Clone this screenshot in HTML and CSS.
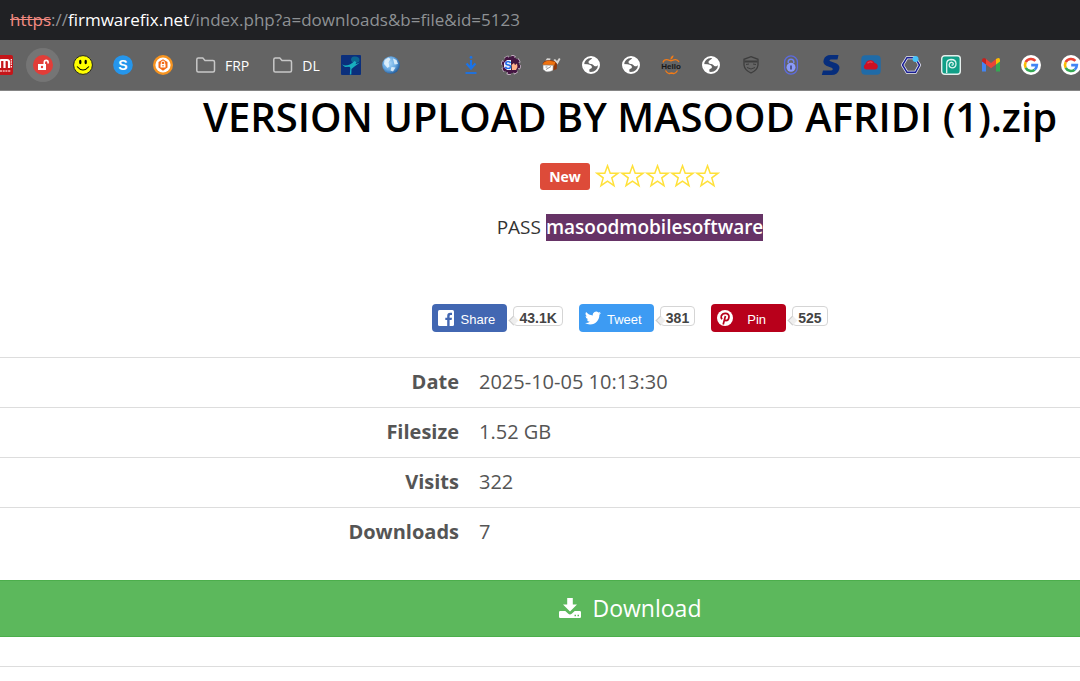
FILE: index.html
```
<!DOCTYPE html>
<html lang="en">
<head>
<meta charset="utf-8">
<meta name="viewport" content="width=device-width, initial-scale=1">
<title>VERSION UPLOAD BY MASOOD AFRIDI (1).zip</title>
<link rel="stylesheet" href="styles.css">
</head>
<body>
<svg class="defs" aria-hidden="true">
  <symbol id="globe" viewBox="0 0 20 20">
    <circle cx="10" cy="10" r="8" fill="#646464" stroke="#fff" stroke-width="2"/>
    <path d="M11.500 2.500C10.500 5 7.500 5 7.500 7.200 8 9.500 11 8.600 12.300 10 13.500 11.500 15.500 12 18 9.500L16.500 5 13.500 2.500Z" fill="#fff"/>
    <path d="M2 9 6.500 9.300C9.500 9.800 11.500 11 10.800 12.700 10.200 14 8.200 13.300 8.300 15L8.500 18 4.500 16.500Z" fill="#fff"/>
  </symbol>
  <symbol id="folder" viewBox="0 0 21 20">
    <path d="M1.800 4.500Q1.800 3 3.300 3H7.800L10 5.500H18Q19.500 5.500 19.500 7V15.500Q19.500 17 18 17H3.300Q1.800 17 1.800 15.500Z" fill="none" stroke="#c8c8c8" stroke-width="1.500"/>
  </symbol>
  <symbol id="google" viewBox="0 0 20 20">
    <circle cx="10" cy="10" r="10" fill="#fff"/>
    <path d="M14.400 5.900A6 6 0 0 0 4.700 7.200" fill="none" stroke="#ea4335" stroke-width="2.600"/>
    <path d="M4.700 7.200A6 6 0 0 0 4.700 12.800" fill="none" stroke="#fbbc05" stroke-width="2.600"/>
    <path d="M4.700 12.800A6 6 0 0 0 13.700 14.700" fill="none" stroke="#34a853" stroke-width="2.600"/>
    <path d="M13.700 14.700A6 6 0 0 0 15.900 10.100H10.200" fill="none" stroke="#4285f4" stroke-width="2.600"/>
  </symbol>
  <symbol id="star" viewBox="0 0 24 24">
    <path d="M12 1.800 14.700 9.200H22.600L16.300 13.900 18.500 21.600 12 17.100 5.500 21.600 7.700 13.900 1.400 9.200H9.300Z" fill="none" stroke="#ffe13a" stroke-width="1.500"/>
  </symbol>
</svg>

<header>
  <div class="address"><s>https</s>://<b>firmwarefix.net</b>/index.php?a=downloads&amp;b=file&amp;id=5123</div>
  <nav class="bookmarks" aria-label="Bookmarks">
    <a href="#" aria-label="Mobile tools"><svg viewBox="0 0 20 20"><rect width="20" height="20" rx="2" fill="#c51519"/><path d="M7 13V6Q7 5 8.500 5H14Q16 5 16 7V13M11.500 5V13" fill="none" stroke="#fff" stroke-width="2.200"/><path d="M18.300 4V13" stroke="#fff" stroke-width="1.200" stroke-dasharray="1.500 .8"/><path d="M7 16H18" stroke="#f3b5b5" stroke-width="1.300" stroke-dasharray="2 .7"/></svg></a>
    <a href="#" class="current" aria-label="Unlocker"><svg viewBox="0 0 20 20"><circle cx="10" cy="10" r="10" fill="#e23d38"/><rect x="5" y="9" width="8" height="6" fill="#fff"/><path d="M11.300 9V7.300a1.900 1.900 0 0 1 3.800 0V8.500" fill="none" stroke="#fff" stroke-width="1.600"/><circle cx="9" cy="12" r="1.200" fill="#e23d38"/></svg></a>
    <a href="#" aria-label="Smile"><svg viewBox="0 0 20 20"><circle cx="10" cy="10" r="9.400" fill="#ff0" stroke="#222" stroke-width="1"/><ellipse cx="7.300" cy="7" rx="1.200" ry="2.200"/><ellipse cx="12.700" cy="7" rx="1.200" ry="2.200"/><path d="M4 11.500Q10 18.500 16 11.500" fill="none" stroke="#000" stroke-width="1.100"/></svg></a>
    <a href="#" aria-label="S"><svg viewBox="0 0 20 20"><circle cx="10" cy="10" r="9.800" fill="#2596ec"/><text x="10" y="15" text-anchor="middle" class="letter" font-size="14" fill="#fff">S</text></svg></a>
    <a href="#" aria-label="Lock"><svg viewBox="0 0 20 20"><circle cx="10" cy="10" r="10" fill="#f79420"/><circle cx="10" cy="10" r="7.600" fill="#fff"/><path d="M10 4.300 14.500 7V12.500L10 15.700 5.500 12.500V7Z" fill="#f36b16"/><path d="M8.300 9V7.800a1.700 1.700 0 0 1 3.400 0V9" fill="none" stroke="#fff" stroke-width="1"/><rect x="7.500" y="9" width="5" height="3.500" rx=".6" fill="#fff"/><circle cx="10" cy="10.700" r=".8" fill="#f36b16"/></svg></a>
    <a href="#" class="folder"><svg><use href="#folder"/></svg><span>FRP</span></a>
    <a href="#" class="folder"><svg><use href="#folder"/></svg><span>DL</span></a>
    <a href="#" aria-label="Dancer"><svg viewBox="0 0 20 20"><rect width="20" height="20" rx="1" fill="#0b2f7c"/><path d="M10 5Q10 1 14 1.500 18.500 1.500 18.500 5 18.500 8 15 7.500L11 7Z" fill="#0c6690"/><path d="M1 9.500 4 10.500Q9 10.500 13.500 6L15.500 7.200 14.500 9.300 19 7.500 13.500 11.500 10.500 14 10.300 19.500H8.800L9.300 13 8.500 11.800 4 12Z" fill="#18aebf"/></svg></a>
    <a href="#" aria-label="World"><svg viewBox="0 0 20 20"><defs><radialGradient id="ball" cx=".4" cy=".4" r=".62"><stop offset="0" stop-color="#a9d6f8"/><stop offset=".6" stop-color="#68a9e2"/><stop offset="1" stop-color="#255f9f"/></radialGradient></defs><circle cx="10" cy="10" r="8.800" fill="url(#ball)"/><path d="M3.500 5 7.500 2.500 9.500 4 7.500 7.500 8.500 11.500 6.500 13 3 9ZM12 3.500 15.500 5 17 9 13.500 9.500ZM10.500 12 14.500 12.500 12 16.500 9.500 15.500Z" fill="#f0faff" opacity=".8"/></svg></a>
    <span class="blank"></span>
    <a href="#" aria-label="Downloads"><svg viewBox="0 0 20 20" fill="none" stroke="#1a73e8"><circle cx="10" cy="2.400" r="1.400" fill="#1a73e8" stroke="none"/><path d="M10 5V14M5.500 8.500 10 13.500 14.500 8.500" stroke-width="2.200"/><path d="M4.500 18H15.500" stroke-width="1.800"/></svg></a>
    <a href="#" aria-label="Gear"><svg viewBox="0 0 20 20"><circle cx="10" cy="10" r="8.200" fill="#431541" stroke="#d9c6d8" stroke-width="3.600" stroke-dasharray="3.820 2.620"/><circle cx="10" cy="10" r="8" fill="#431541" stroke="#431541" stroke-width="2.600" stroke-dasharray="3.140 3.140"/><path d="M3 8 6 5H10V15H6L3 12Z" fill="#e9f1ff"/><path d="M10.500 10 13 8 14 10 16 8.500 16.500 12 15 15H11Z" fill="#ffb18c"/><text x="6.800" y="14" text-anchor="middle" class="letter" font-size="11" fill="#1768e8">S</text></svg></a>
    <a href="#" aria-label="Helmet"><svg viewBox="0 0 20 20"><path d="M4.500 5.500 6 3.300 9.500 3.500 9 6ZM12.500 5 14 4 16 6 18 3 19.500 4 16.500 9.500Z" fill="#d8d5d2"/><path d="M1.500 9Q3 5 8 5.300 14 4.500 16 9L15.700 14 12 15.500V10Z" fill="#8f3508"/><path d="M1.500 10Q3 5.800 8.500 5.800L14.500 7 13 11Z" fill="#ef720f"/><path d="M2 10 12.300 10.200 12 15.500Q8 17.500 5 16.700L2 14.500Z" fill="#fff" stroke="#777" stroke-width=".6"/><path d="M5 14.500 10 11.500M4.500 12H6.500" stroke="#777" stroke-width=".8"/></svg></a>
    <a href="#" aria-label="Site"><svg><use href="#globe"/></svg></a>
    <a href="#" aria-label="Site"><svg><use href="#globe"/></svg></a>
    <a href="#" aria-label="Hello"><svg viewBox="0 0 20 20"><path d="M9.500 5Q9 1.500 12.500 .3 12.500 3.500 9.500 5Z" fill="#f47b16"/><path d="M2 7.500Q3 4 7 4.800L10 5.800 13 4.800Q16.500 4 18 7M4.500 15.500Q6.500 19 8.500 18.500L10.500 18 12.500 18.500Q14.500 19 16.500 15.500" fill="none" stroke="#f47b16" stroke-width="1.300"/><text x="10" y="13.800" text-anchor="middle" class="letter" font-size="8" fill="#171717">Hello</text></svg></a>
    <a href="#" aria-label="Site"><svg><use href="#globe"/></svg></a>
    <a href="#" aria-label="Shield"><svg viewBox="0 0 20 20" fill="none" stroke="#3d3d3d" stroke-width="1.300"><path d="M10 1.700 17 4.300V10Q16.500 15 10 18 3.500 15 3 10V4.300Z"/><path d="M3.500 6.500H16.500" stroke-width="2"/><path d="M5 9.500 8 9M12 9 15 9.500M6 12.500 10 14 14 12.500" stroke-width="1"/></svg></a>
    <a href="#" aria-label="Padlock"><svg viewBox="0 0 20 20" fill="none"><rect x="3.600" y=".8" width="12.800" height="18.400" rx="6.400" stroke="#5c6be0" stroke-width="1.300"/><path d="M7.200 8V7a2.800 2.800 0 0 1 5.600 0V8" stroke="#6f83f0" stroke-width="1.500"/><circle cx="10" cy="12.300" r="4.500" fill="#8b9bfa"/><path d="M10 10.500V14.500" stroke="#3f4579" stroke-width="1.600"/></svg></a>
    <a href="#" aria-label="S"><svg viewBox="0 0 20 20"><path d="M17.500 0 16.500 4.500H9.800Q7.800 4.700 8.700 6L15.500 8.500Q19.700 10.500 18 15 16.500 20 10.500 20H.8L2 15.500H10Q12.700 15 11.200 13L5.300 10.700Q1.300 8.500 2.800 4.500 4.200 0 9.500 0Z" fill="#062d7c"/></svg></a>
    <a href="#" aria-label="Cloud"><svg viewBox="0 0 20 20"><rect x=".3" y=".3" width="19.400" height="19.400" rx="4" fill="#1f6ba8"/><path d="M5 14.500A2.800 2.800 0 0 1 4.300 9.300Q5.500 5 9.500 5.300 12 4.500 13.700 8 16.800 8.500 16.800 11.500 16.500 14.500 14 14.500Z" fill="#cb1024"/><path d="M6.500 8.300Q9 5.900 11.500 7.500" fill="none" stroke="#e8424d" stroke-width="1.300"/></svg></a>
    <a href="#" aria-label="Hexagon"><svg viewBox="0 0 20 20" fill="none"><path d="M6 2.700H14L18.500 10 14.500 17.300H6L1.500 10Z" stroke="#e7e8f5" stroke-width="3"/><path d="M6 2.700H14L18.500 10 14.500 17.300H6L1.500 10Z" stroke="#171c91" stroke-width="1.500"/><circle cx="14.500" cy="4" r="3" fill="#46c3fa"/></svg></a>
    <a href="#" aria-label="Spiral"><svg viewBox="0 0 20 20"><rect x=".7" y=".7" width="18.600" height="18.600" rx="3" fill="#119f87" stroke="#e6efed" stroke-width="1.400"/><path d="M5.700 18V8.500Q5.700 4.700 10 4.500 15 4.500 15 8.700 15 12.700 11 12.800 7.800 12.500 8.200 9.300 8.700 7 10.800 7.300 12.700 7.800 12.100 9.400 11.600 10.500 10.500 9.800" fill="none" stroke="#dff5f0" stroke-width="1.300"/></svg></a>
    <a href="#" aria-label="Mail"><svg viewBox="0 0 20 20"><path d="M1 5V16.500H5V9Z" fill="#4285f4"/><path d="M15 9V16.500H19V5Z" fill="#34a853"/><path d="M1 5Q1 3 3.500 3L5 4V9.500L1 6.500Z" fill="#c5221f"/><path d="M5 4 10 8 15 4V9.500L10 13.200 5 9.500Z" fill="#ea4335"/><path d="M15 4Q19 1.500 19 5V6.500L15 9.500Z" fill="#fbbc04"/></svg></a>
    <a href="#" aria-label="Google"><svg><use href="#google"/></svg></a>
    <a href="#" aria-label="Google"><svg><use href="#google"/></svg></a>
  </nav>
</header>

<main>
  <section class="intro">
    <h1>VERSION UPLOAD BY MASOOD AFRIDI (1).zip</h1>
    <div class="rating">
      <span class="label">New</span>
      <span class="stars" role="img" aria-label="Not rated yet"><svg><use href="#star"/></svg><svg><use href="#star"/></svg><svg><use href="#star"/></svg><svg><use href="#star"/></svg><svg><use href="#star"/></svg></span>
    </div>
    <p class="pass">PASS <mark>masoodmobilesoftware</mark></p>
    <div class="social">
      <div class="share">
        <a href="#" class="facebook"><svg viewBox="0 0 16 16"><rect width="16" height="16" rx="1.500" fill="#fff"/><path d="M9.200 16V10H7.300V7.700H9.200V6Q9.200 2.800 12.300 2.800H14V5H12.700Q11.600 5 11.600 6.200V7.700H14L13.600 10H11.600V16Z" fill="#4267b2"/></svg><span>Share</span></a>
        <span class="count">43.1K</span>
      </div>
      <div class="share">
        <a href="#" class="twitter"><svg viewBox="0 0 24 24"><path fill="#fff" d="M23.950 4.570a10 10 0 0 1-2.820.770 4.960 4.960 0 0 0 2.160-2.720c-.950.550-2 .950-3.130 1.180a4.920 4.920 0 0 0-8.380 4.480C7.690 8.090 4.070 6.130 1.640 3.160a4.920 4.920 0 0 0 1.520 6.570 4.900 4.900 0 0 1-2.230-.610v.060a4.920 4.920 0 0 0 3.950 4.830 5 5 0 0 1-2.210.080 4.930 4.930 0 0 0 4.600 3.420A9.870 9.870 0 0 1 0 19.540a13.990 13.990 0 0 0 7.550 2.210c9.050 0 14-7.500 14-13.980 0-.210 0-.420-.020-.630a9.900 9.900 0 0 0 2.420-2.570Z"/></svg><span>Tweet</span></a>
        <span class="count">381</span>
      </div>
      <div class="share">
        <a href="#" class="pinterest"><svg viewBox="0 0 16 16"><circle cx="8" cy="8" r="8" fill="#fff"/><path d="M5 9.300Q3.700 7.500 4.300 5.800 5.500 3.200 8.400 3.300 12 3.500 12 6.800 11.600 10.600 8.900 10.600 7.900 10.500 7.500 9.700M8.400 6 6.200 14.500" fill="none" stroke="#b8001b" stroke-width="1.700"/></svg><span>Pin</span></a>
        <span class="count">525</span>
      </div>
    </div>
  </section>

  <table class="details">
    <tr><th scope="row">Date</th><td>2025-10-05 10:13:30</td></tr>
    <tr><th scope="row">Filesize</th><td>1.52 GB</td></tr>
    <tr><th scope="row">Visits</th><td>322</td></tr>
    <tr><th scope="row">Downloads</th><td>7</td></tr>
  </table>

  <button type="button" class="download"><svg viewBox="0 0 22 20"><path d="M8.200 0H13.800V6.500H18L11 13.500 4 6.500H8.200Z" fill="#fff"/><path d="M1.200 13H6.300L9.300 15.800Q11 17 12.700 15.800L15.700 13H20.800Q22 13 22 14.200V18.800Q22 20 20.800 20H1.200Q0 20 0 18.800V14.200Q0 13 1.200 13ZM15.500 16.800V18.200H17V16.800ZM18.500 16.800V18.200H20V16.800Z" fill="#fff" fill-rule="evenodd"/></svg><span>Download</span></button>
  <hr>
</main>
</body>
</html>
```
FILE: styles.css
```
:root {
  --offset: 180px;
  --line: #ddd;
}

* {
  box-sizing: border-box;
}

body {
  margin: 0;
  overflow-x: hidden;
  background: #fff;
  color: #555;
  font-family: "Open Sans", sans-serif;
  font-size: 20px;
}

a {
  color: inherit;
  text-decoration: none;
}

.defs {
  position: absolute;
  width: 0;
  height: 0;
}

.address {
  height: 40px;
  padding-left: 10px;
  background: #202124;
  color: #8e9194;
  font-family: "Open Sans", sans-serif;
  font-size: 17px;
  line-height: 39px;
  white-space: nowrap;
}

.address s {
  color: #f28b82;
}

.address b {
  color: #fff;
  font-weight: 400;
}

.bookmarks {
  display: flex;
  align-items: center;
  gap: 20px;
  height: 51px;
  overflow: hidden;
  border-bottom: 1px solid #858585;
  background: #646464;
}

.bookmarks > * {
  flex: none;
  width: 20px;
  height: 20px;
}

.bookmarks > :first-child {
  margin-left: -7px;
}

.bookmarks svg {
  display: block;
  width: 20px;
  height: 20px;
}

.bookmarks .current {
  border-radius: 50%;
  background: #757575;
  box-shadow: 0 0 0 7px #757575;
}

.bookmarks .folder {
  display: flex;
  align-items: center;
  gap: 9px;
  width: auto;
  padding: 0 1px 0 2px;
  color: #fff;
  font-family: "Open Sans", sans-serif;
  font-size: 14px;
}

.bookmarks .folder svg {
  width: 21px;
}

.letter {
  font-family: "Liberation Sans", sans-serif;
  font-weight: 700;
}

.intro {
  display: flex;
  flex-direction: column;
  align-items: center;
  padding-left: var(--offset);
}

h1 {
  margin: 0;
  color: #000;
  font-size: 40px;
  font-weight: 600;
  line-height: 52px;
  white-space: nowrap;
}

.rating {
  display: flex;
  align-items: center;
  gap: 5px;
  margin-top: 20px;
}

.label {
  padding: 0 9px;
  border-radius: 3px;
  background: #dd4b39;
  color: #fff;
  font-size: 14px;
  font-weight: 700;
  line-height: 27px;
}

.stars {
  display: flex;
  padding-bottom: 2px;
}

.stars svg {
  width: 25px;
  height: 24px;
}

.pass {
  margin: 24px 0 0;
  color: #333;
  font-size: 19px;
  font-weight: 500;
  line-height: 27px;
}

.pass mark {
  display: inline-block;
  background: #663366;
  color: #fff;
  font-weight: 600;
}

.social {
  display: flex;
  gap: 16px;
  margin-top: 63px;
  font-family: "Liberation Sans", Arial, sans-serif;
}

.share {
  display: flex;
  align-items: flex-start;
  gap: 6px;
}

.share a {
  display: flex;
  align-items: center;
  width: 75px;
  height: 28px;
  padding: 0 6px;
  border-radius: 4px;
  color: #fff;
  font-size: 13px;
}

.share a span {
  flex: 1;
  padding-top: 2px;
  text-align: center;
}

.share svg {
  width: 16px;
  height: 16px;
}

.facebook {
  background: #4267b2;
}

.twitter {
  background: #3d9bf3;
}

.pinterest {
  background: #b8001b;
}

.count {
  position: relative;
  height: 20px;
  margin-top: 2px;
  padding: 0 5px;
  border: 1px solid #d5d5d5;
  border-radius: 4px;
  color: #444;
  font-size: 14px;
  font-weight: 700;
  line-height: 22px;
}

.count::before {
  content: "";
  position: absolute;
  top: 10px;
  left: -4px;
  width: 6px;
  height: 6px;
  border-bottom: 1px solid #ccc;
  border-left: 1px solid #ccc;
  background: #eee;
  transform: rotate(45deg);
}

.details {
  width: 100%;
  margin-top: 25px;
  border-collapse: collapse;
}

.details th,
.details td {
  padding: 10px 10px 12px;
  border-top: 1px solid var(--line);
  line-height: 27px;
}

.details th {
  width: 469px;
  font-weight: 700;
  text-align: right;
}

.download {
  display: flex;
  align-items: center;
  justify-content: center;
  gap: 12px;
  width: 100%;
  height: 57px;
  margin-top: 23px;
  padding: 0 0 2px var(--offset);
  border: 1px solid #4cae4c;
  border-width: 1px 0;
  background: #5cb85c;
  color: #fff;
  font: 400 23px "Open Sans", sans-serif;
}

.download svg {
  width: 22px;
  height: 20px;
}

hr {
  margin: 29px 0 0;
  border: 0;
  border-top: 1px solid var(--line);
}
```
